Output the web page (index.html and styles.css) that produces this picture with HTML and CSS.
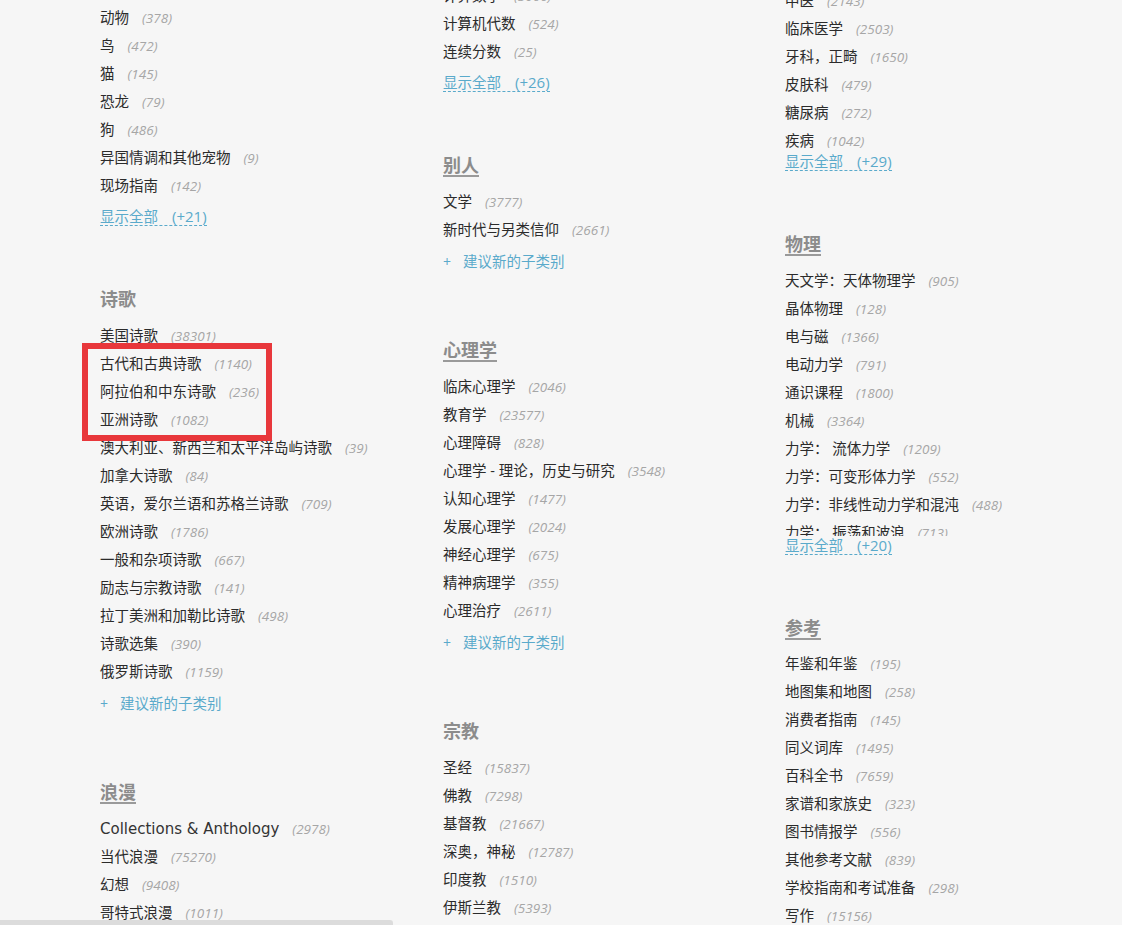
FILE: index.html
```html
<!DOCTYPE html>
<html lang="zh-CN">
<head>
<meta charset="utf-8">
<title>分类</title>
<link rel="stylesheet" href="styles.css">
</head>
<body>
<div class="page">
  <div class="col col-a">
    <section class="sec">
      <ul class="list">
        <li><span class="name">动物</span><span class="cnt">(378)</span></li>
        <li><span class="name">鸟</span><span class="cnt">(472)</span></li>
        <li><span class="name">猫</span><span class="cnt">(145)</span></li>
        <li><span class="name">恐龙</span><span class="cnt">(79)</span></li>
        <li><span class="name">狗</span><span class="cnt">(486)</span></li>
        <li><span class="name">异国情调和其他宠物</span><span class="cnt">(9)</span></li>
        <li><span class="name">现场指南</span><span class="cnt">(142)</span></li>
      </ul>
      <div class="more"><a class="more-link">显示全部<span class="plus">(+21)</span></a></div>
    </section>
    <section class="sec">
      <h2 class="head">诗歌</h2>
      <ul class="list">
        <li><span class="name">美国诗歌</span><span class="cnt">(38301)</span></li>
        <li><span class="name">古代和古典诗歌</span><span class="cnt">(1140)</span></li>
        <li><span class="name">阿拉伯和中东诗歌</span><span class="cnt">(236)</span></li>
        <li><span class="name">亚洲诗歌</span><span class="cnt">(1082)</span></li>
        <li><span class="name">澳大利亚、新西兰和太平洋岛屿诗歌</span><span class="cnt">(39)</span></li>
        <li><span class="name">加拿大诗歌</span><span class="cnt">(84)</span></li>
        <li><span class="name">英语，爱尔兰语和苏格兰诗歌</span><span class="cnt">(709)</span></li>
        <li><span class="name">欧洲诗歌</span><span class="cnt">(1786)</span></li>
        <li><span class="name">一般和杂项诗歌</span><span class="cnt">(667)</span></li>
        <li><span class="name">励志与宗教诗歌</span><span class="cnt">(141)</span></li>
        <li><span class="name">拉丁美洲和加勒比诗歌</span><span class="cnt">(498)</span></li>
        <li><span class="name">诗歌选集</span><span class="cnt">(390)</span></li>
        <li><span class="name">俄罗斯诗歌</span><span class="cnt">(1159)</span></li>
      </ul>
      <div class="suggest"><span class="suggest-plus">+</span><a class="suggest-link">建议新的子类别</a></div>
    </section>
    <section class="sec">
      <h2 class="head head-u">浪漫</h2>
      <ul class="list">
        <li><span class="name name-latin">Collections &amp; Anthology</span><span class="cnt">(2978)</span></li>
        <li><span class="name">当代浪漫</span><span class="cnt">(75270)</span></li>
        <li><span class="name">幻想</span><span class="cnt">(9408)</span></li>
        <li><span class="name">哥特式浪漫</span><span class="cnt">(1011)</span></li>
        <li><span class="name">历史浪漫</span><span class="cnt">(9862)</span></li>
      </ul>
    </section>
  </div>

  <div class="col col-b">
    <section class="sec">
      <ul class="list">
        <li><span class="name">计算数学</span><span class="cnt">(3066)</span></li>
        <li><span class="name">计算机代数</span><span class="cnt">(524)</span></li>
        <li><span class="name">连续分数</span><span class="cnt">(25)</span></li>
      </ul>
      <div class="more"><a class="more-link">显示全部<span class="plus">(+26)</span></a></div>
    </section>
    <section class="sec">
      <h2 class="head head-u">别人</h2>
      <ul class="list">
        <li><span class="name">文学</span><span class="cnt">(3777)</span></li>
        <li><span class="name">新时代与另类信仰</span><span class="cnt">(2661)</span></li>
      </ul>
      <div class="suggest"><span class="suggest-plus">+</span><a class="suggest-link">建议新的子类别</a></div>
    </section>
    <section class="sec">
      <h2 class="head head-u">心理学</h2>
      <ul class="list">
        <li><span class="name">临床心理学</span><span class="cnt">(2046)</span></li>
        <li><span class="name">教育学</span><span class="cnt">(23577)</span></li>
        <li><span class="name">心理障碍</span><span class="cnt">(828)</span></li>
        <li><span class="name">心理学 - 理论，历史与研究</span><span class="cnt">(3548)</span></li>
        <li><span class="name">认知心理学</span><span class="cnt">(1477)</span></li>
        <li><span class="name">发展心理学</span><span class="cnt">(2024)</span></li>
        <li><span class="name">神经心理学</span><span class="cnt">(675)</span></li>
        <li><span class="name">精神病理学</span><span class="cnt">(355)</span></li>
        <li><span class="name">心理治疗</span><span class="cnt">(2611)</span></li>
      </ul>
      <div class="suggest"><span class="suggest-plus">+</span><a class="suggest-link">建议新的子类别</a></div>
    </section>
    <section class="sec">
      <h2 class="head">宗教</h2>
      <ul class="list">
        <li><span class="name">圣经</span><span class="cnt">(15837)</span></li>
        <li><span class="name">佛教</span><span class="cnt">(7298)</span></li>
        <li><span class="name">基督教</span><span class="cnt">(21667)</span></li>
        <li><span class="name">深奥，神秘</span><span class="cnt">(12787)</span></li>
        <li><span class="name">印度教</span><span class="cnt">(1510)</span></li>
        <li><span class="name">伊斯兰教</span><span class="cnt">(5393)</span></li>
        <li><span class="name">犹太教</span><span class="cnt">(4317)</span></li>
      </ul>
    </section>
  </div>

  <div class="col col-c">
    <section class="sec">
      <ul class="list clip-med">
        <li><span class="name">中医</span><span class="cnt">(2143)</span></li>
        <li><span class="name">临床医学</span><span class="cnt">(2503)</span></li>
        <li><span class="name">牙科，正畸</span><span class="cnt">(1650)</span></li>
        <li><span class="name">皮肤科</span><span class="cnt">(479)</span></li>
        <li><span class="name">糖尿病</span><span class="cnt">(272)</span></li>
        <li><span class="name">疾病</span><span class="cnt">(1042)</span></li>
        <li><span class="name">药物</span><span class="cnt">(3012)</span></li>
      </ul>
      <div class="more more-tight"><a class="more-link">显示全部<span class="plus">(+29)</span></a></div>
    </section>
    <section class="sec">
      <h2 class="head head-u">物理</h2>
      <ul class="list clip-phys">
        <li><span class="name">天文学：天体物理学</span><span class="cnt">(905)</span></li>
        <li><span class="name">晶体物理</span><span class="cnt">(128)</span></li>
        <li><span class="name">电与磁</span><span class="cnt">(1366)</span></li>
        <li><span class="name">电动力学</span><span class="cnt">(791)</span></li>
        <li><span class="name">通识课程</span><span class="cnt">(1800)</span></li>
        <li><span class="name">机械</span><span class="cnt">(3364)</span></li>
        <li><span class="name">力学： 流体力学</span><span class="cnt">(1209)</span></li>
        <li><span class="name">力学：可变形体力学</span><span class="cnt">(552)</span></li>
        <li><span class="name">力学：非线性动力学和混沌</span><span class="cnt">(488)</span></li>
        <li><span class="name">力学： 振荡和波浪</span><span class="cnt">(713)</span></li>
        <li><span class="name">力学：热力学</span><span class="cnt">(1160)</span></li>
      </ul>
      <div class="more more-tight"><a class="more-link">显示全部<span class="plus">(+20)</span></a></div>
    </section>
    <section class="sec">
      <h2 class="head head-u">参考</h2>
      <ul class="list">
        <li><span class="name">年鉴和年鉴</span><span class="cnt">(195)</span></li>
        <li><span class="name">地图集和地图</span><span class="cnt">(258)</span></li>
        <li><span class="name">消费者指南</span><span class="cnt">(145)</span></li>
        <li><span class="name">同义词库</span><span class="cnt">(1495)</span></li>
        <li><span class="name">百科全书</span><span class="cnt">(7659)</span></li>
        <li><span class="name">家谱和家族史</span><span class="cnt">(323)</span></li>
        <li><span class="name">图书情报学</span><span class="cnt">(556)</span></li>
        <li><span class="name">其他参考文献</span><span class="cnt">(839)</span></li>
        <li><span class="name">学校指南和考试准备</span><span class="cnt">(298)</span></li>
        <li><span class="name">写作</span><span class="cnt">(15156)</span></li>
        <li><span class="name">词典</span><span class="cnt">(2210)</span></li>
      </ul>
    </section>
  </div>
</div>
<div class="highlight"></div>
<div class="hscroll"></div>
</body>
</html>
```

FILE: styles.css
```css
html, body {
  margin: 0;
  padding: 0;
  height: 925px;
  overflow: hidden;
  background: #f6f6f6;
}
body {
  font-family: "Open Sans", "Noto Sans CJK SC", sans-serif;
  color: #2b2b2b;
  position: relative;
}
.page {
  display: grid;
  grid-template-columns: 343px 342px 1fr;
  padding-left: 100px;
  align-items: start;
}
.col { display: flex; flex-direction: column; }
.col-a { margin-top: 3px; }
.col-b { margin-top: -19px; }
.col-c { margin-top: -14px; }

.sec { margin-bottom: 59px; }

.head {
  margin: 0 0 10.5px 0;
  font-family: "Noto Sans CJK SC", sans-serif;
  font-size: 18px;
  line-height: 24px;
  font-weight: 700;
  color: #8c8c8c;
}
.head-u {
  text-decoration: underline;
  text-decoration-thickness: 1.5px;
  text-underline-offset: 3px;
  text-decoration-color: #9a9a9a;
}

.list {
  list-style: none;
  margin: 0;
  padding: 0;
}
.list li {
  height: 28px;
  line-height: 28px;
  white-space: nowrap;
}
.name {
  font-size: 14.5px;
  color: #2b2b2b;
}
.name-latin {
  font-family: "DejaVu Sans", "Noto Sans CJK SC", sans-serif;
  font-size: 15px;
  color: #333;
}
.cnt {
  margin-left: 13px;
  font-size: 13.5px;
  font-style: italic;
  color: #a6a6a6;
}
.clip-med { height: 166px; overflow: hidden; }
.clip-phys { height: 270px; overflow: hidden; }

.more {
  margin-top: 8px;
  height: 20px;
  line-height: 18px;
}
.more-tight { margin-top: 0; }
.more-link {
  display: inline-block;
  font-size: 14.5px;
  color: #5aaacb;
  border-bottom: 1px dashed #5aaacb;
  line-height: 17px;
}
.plus { margin-left: 14px; font-size: 15px; }

.suggest {
  margin-top: 9px;
  margin-bottom: 6.5px;
  height: 20px;
  line-height: 20px;
  color: #5aaacb;
  font-size: 14.5px;
}
.suggest-plus { display: inline-block; width: 20px; font-size: 14px; }
.suggest-link { color: #5aaacb; }

.highlight {
  position: absolute;
  left: 82px;
  top: 343px;
  width: 178px;
  height: 86px;
  border: 6px solid #e8373b;
}
.hscroll {
  position: absolute;
  left: 0;
  bottom: 0;
  width: 393px;
  height: 5px;
  background: #dcdcdc;
  border-radius: 0 3px 0 0;
}
```
